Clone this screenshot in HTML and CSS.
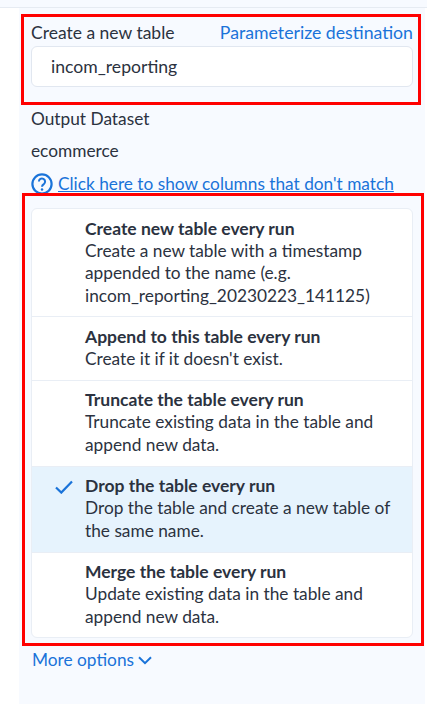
FILE: index.html
```html
<!DOCTYPE html>
<html lang="en">
<head>
<meta charset="utf-8">
<title>Destination</title>
<link rel="stylesheet" href="styles.css">
</head>
<body>
<div class="topband"></div>
<main class="panel">
  <div class="annot annot-a"></div>
  <div class="annot annot-b"></div>
  <div class="field-head">
    <span class="field-title">Create a new table</span>
    <a class="link param">Parameterize destination</a>
  </div>
  <input class="text-input" value="incom_reporting" aria-label="Table name">
  <p class="label first">Output Dataset</p>
  <p class="label second">ecommerce</p>
  <p class="help">
    <svg class="help-icon" viewBox="0 0 22 22" width="22" height="22"><circle cx="11" cy="11" r="9.6" fill="none" stroke="#1a73d9" stroke-width="2.2"/><path d="M7.9 8.6a3.1 3.1 0 1 1 4.9 2.5c-1.2.8-1.8 1.3-1.8 2.6" fill="none" stroke="#1a73d9" stroke-width="2"/><circle cx="11" cy="16.4" r="1.25" fill="#1a73d9"/></svg>
    <a class="link underline">Click here to show columns that don't match</a>
  </p>
  <ul class="options">
    <li class="option">
      <strong>Create new table every run</strong>
      <span>Create a new table with a timestamp appended to the name (e.g. incom_reporting_20230223_141125)</span>
    </li>
    <li class="option">
      <strong>Append to this table every run</strong>
      <span>Create it if it doesn't exist.</span>
    </li>
    <li class="option">
      <strong>Truncate the table every run</strong>
      <span>Truncate existing data in the table and append new data.</span>
    </li>
    <li class="option selected">
      <svg class="check" viewBox="0 0 18 14" width="18" height="14"><path d="M1 7.5 6.3 12.6 17 1.5" fill="none" stroke="#1a73d9" stroke-width="2.2"/></svg>
      <strong>Drop the table every run</strong>
      <span>Drop the table and create a new table of the same name.</span>
    </li>
    <li class="option">
      <strong>Merge the table every run</strong>
      <span>Update existing data in the table and append new data.</span>
    </li>
  </ul>
  <a class="link more">More options
    <svg viewBox="0 0 14 9" width="14" height="9"><path d="M1 1.2 7 7.2 13 1.2" fill="none" stroke="#1a73d9" stroke-width="2"/></svg>
  </a>
</main>
</body>
</html>
```
FILE: styles.css
```css
* { box-sizing: border-box; }
html, body { margin: 0; padding: 0; height: 100%; }
body {
  background: #fff;
  font-family: Lato, "Liberation Sans", sans-serif;
  font-size: 17.3px;
  color: #2b3240;
  overflow: hidden;
}
.topband {
  height: 8px;
  background: #f7faff;
  border-bottom: 1px solid #e6ebf2;
}
.panel {
  position: relative;
  margin-left: 19px;
  margin-right: 2px;
  padding: 14px 12px 0;
  height: 696px;
  background: #f7faff;
}
.annot {
  position: absolute;
  border: 3px solid #ff0000;
  pointer-events: none;
}
.annot-a { left: 2px; top: 6px; width: 400px; height: 91px; }
.annot-b { left: 3px; top: 185px; width: 402px; height: 453px; }
.field-head {
  display: flex;
  justify-content: space-between;
  line-height: 22px;
  height: 22px;
}
.field-title { font-size: 17.5px; }
.param { font-size: 17.7px; }
.link { color: #1a73d9; text-decoration: none; }
.underline { text-decoration: underline; font-size: 17.25px; }
.text-input {
  display: block;
  width: 100%;
  height: 41px;
  margin-top: 2px;
  padding: 0 0 0 19px;
  background: #fff;
  border: 1px solid #e1e7f0;
  border-radius: 6px;
  font: inherit;
  font-size: 17.6px;
  color: inherit;
}
.label { margin: 0; line-height: 22px; }
.first { margin-top: 21px; }
.second { margin-top: 10px; }
.help {
  display: flex;
  align-items: center;
  gap: 5px;
  margin: 11px 0 0;
  line-height: 22px;
}
.help-icon { flex: none; }
.options {
  list-style: none;
  margin: 13px 0 0;
  padding: 0;
  background: #fff;
  border: 1px solid #e9eef5;
  border-radius: 6px;
  overflow: hidden;
}
.option {
  position: relative;
  padding: 7.5px 20px 9.2px 53px;
  border-top: 1px solid #e9eef5;
  line-height: 22.5px;
}
.option:first-child { border-top: 0; }
.option strong { display: block; font-weight: 700; font-size: 17.5px; line-height: 23.2px; }
.option span { display: block; }
.selected { background: #e6f3fd; }
.check { position: absolute; left: 23px; top: 13px; }
.more {
  display: inline-flex;
  align-items: center;
  gap: 4px;
  margin: 11px 0 0 1px;
  line-height: 22px;
}
```
